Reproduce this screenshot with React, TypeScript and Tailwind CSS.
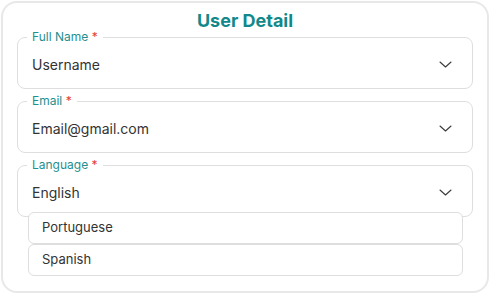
import React from "react";

type Field = { label: string; value: string };

const fields: Field[] = [
  { label: "Full Name", value: "Username" },
  { label: "Email", value: "Email@gmail.com" },
  { label: "Language", value: "English" },
];

const options = ["Portuguese", "Spanish"];

function Chevron() {
  return (
    <svg width="13" height="7" viewBox="0 0 13 7" fill="none">
      <path d="M1 1L6.5 6L12 1" stroke="#3a3a3a" strokeWidth="1.1" strokeLinecap="round" strokeLinejoin="round" />
    </svg>
  );
}

function SelectField({ field, open }: { field: Field; open?: boolean }) {
  return (
    <div className="relative">
      <fieldset className="border border-[#dedede] rounded-lg pl-[14px] pr-[20px] h-[59px]">
        <legend className="px-[5px] ml-[-5px] text-[12px] leading-[14px] text-[#1f9090]">
          {field.label} <span className="text-[#e23b3b]">*</span>
        </legend>
        <div className="h-[44px] flex items-center justify-between pb-[4px]">
          <span className="text-[14px] text-[#333333]">{field.value}</span>
          <Chevron />
        </div>
      </fieldset>
      {open && (
        <div className="absolute left-[11px] right-[10px] top-[calc(100%-5px)] flex flex-col">
          {options.map((o) => (
            <div
              key={o}
              className="h-[32px] bg-white border border-[#dedede] rounded-md px-[13px] flex items-center text-[13px] text-[#333333]"
            >
              {o}
            </div>
          ))}
        </div>
      )}
    </div>
  );
}

export default function App() {
  return (
    <div className="w-[490px] h-[295px] p-px bg-white" style={{ fontFamily: "Inter, 'Noto Sans', sans-serif" }}>
      <div className="h-[292px] border-2 border-[#e8e8e8] rounded-2xl px-[14px] pt-[6px]">
        <h1 className="text-center text-[18px] leading-[24px] font-bold text-[#12888a]">User Detail</h1>
        <div className="flex flex-col gap-[5px] mt-[-3px]">
          {fields.map((f, i) => (
            <SelectField key={f.label} field={f} open={i === 2} />
          ))}
        </div>
      </div>
    </div>
  );
}
